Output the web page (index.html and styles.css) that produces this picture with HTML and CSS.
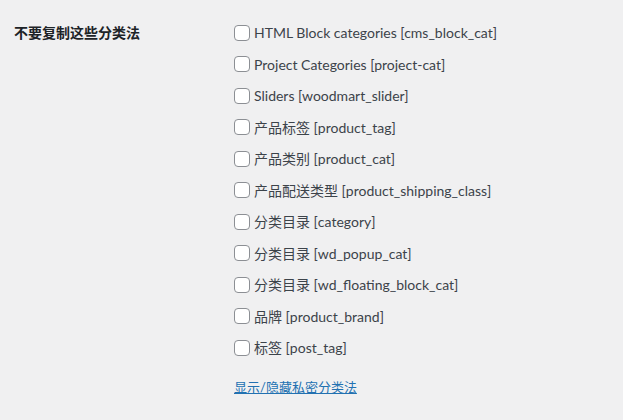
FILE: index.html
```html
<!DOCTYPE html>
<html lang="zh-CN">
<head>
<meta charset="utf-8">
<title>设置</title>
<link rel="stylesheet" href="styles.css">
</head>
<body>
<div class="form-row">
  <div class="th">不要复制这些分类法</div>
  <div class="td">
    <label class="opt"><span class="box"></span><span>HTML Block categories [cms_block_cat]</span></label>
    <label class="opt"><span class="box"></span><span>Project Categories [project-cat]</span></label>
    <label class="opt"><span class="box"></span><span>Sliders [woodmart_slider]</span></label>
    <label class="opt"><span class="box"></span><span>产品标签 [product_tag]</span></label>
    <label class="opt"><span class="box"></span><span>产品类别 [product_cat]</span></label>
    <label class="opt"><span class="box"></span><span>产品配送类型 [product_shipping_class]</span></label>
    <label class="opt"><span class="box"></span><span>分类目录 [category]</span></label>
    <label class="opt"><span class="box"></span><span>分类目录 [wd_popup_cat]</span></label>
    <label class="opt"><span class="box"></span><span>分类目录 [wd_floating_block_cat]</span></label>
    <label class="opt"><span class="box"></span><span>品牌 [product_brand]</span></label>
    <label class="opt"><span class="box"></span><span>标签 [post_tag]</span></label>
    <a class="toggle" href="#">显示/隐藏私密分类法</a>
  </div>
</div>
</body>
</html>
```
FILE: styles.css
```css
html, body {
  margin: 0;
  padding: 0;
  background: #f0f0f1;
}
body {
  font-family: "Lato", "Noto Sans CJK SC", sans-serif;
  font-size: 14px;
  color: #3c434a;
  width: 623px;
  height: 420px;
  overflow: hidden;
}
.form-row {
  display: flex;
  padding: 22px 0 0 14px;
}
.th {
  width: 220px;
  flex: none;
  font-weight: 700;
  color: #1d2327;
  line-height: 21px;
}
.td {
  display: flex;
  flex-direction: column;
  align-items: flex-start;
}
.opt {
  display: flex;
  align-items: center;
  gap: 4px;
  height: 21px;
  line-height: 21px;
  margin-bottom: 10.55px;
  color: #3c434a;
}
.box {
  width: 16px;
  height: 16px;
  box-sizing: border-box;
  border: 1px solid #8c8f94;
  border-radius: 4px;
  background: #fff;
  flex: none;
}
.toggle {
  margin-top: 8px;
  font-size: 13px;
  color: #2271b1;
  text-decoration: underline;
  line-height: 21px;
}
```
